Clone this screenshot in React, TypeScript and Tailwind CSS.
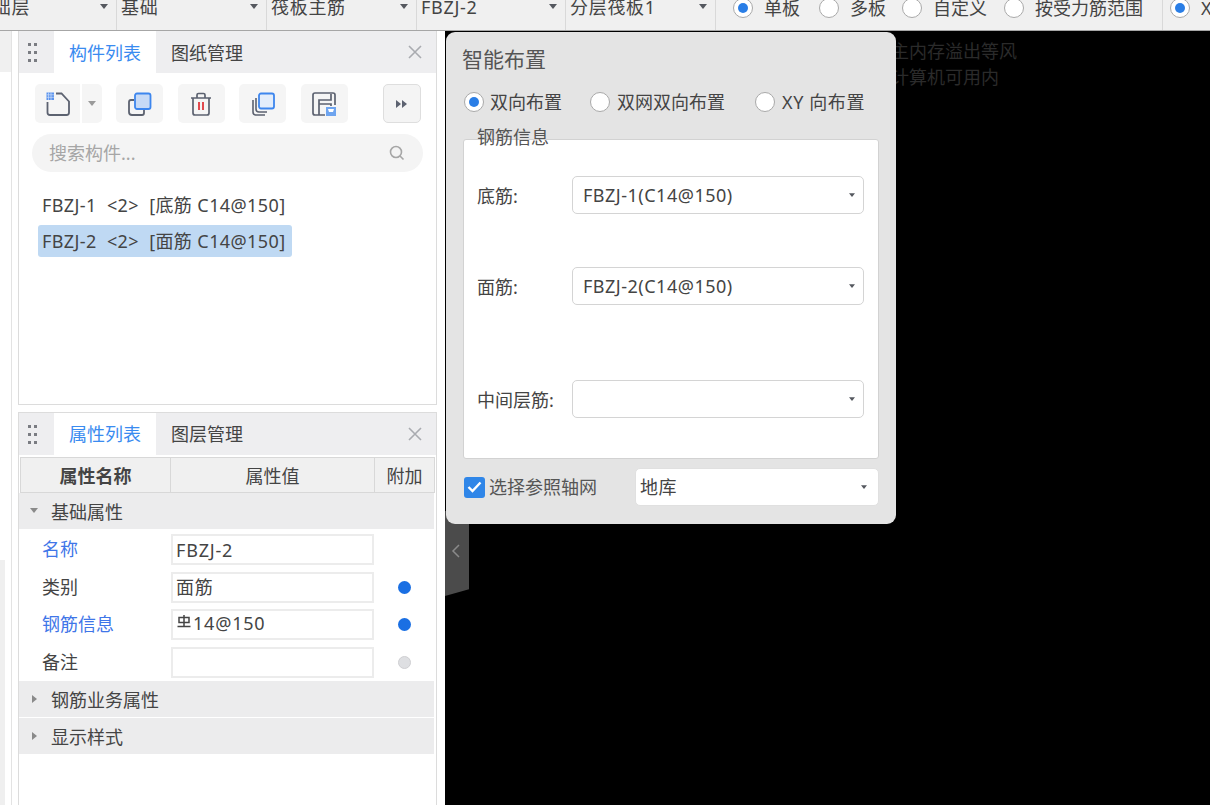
import React from "react";

const font = { fontFamily: '"Noto Sans", "Noto Sans CJK SC", sans-serif' };

function Caret({ className = "" }: { className?: string }) {
  return (
    <svg width="8" height="5" viewBox="0 0 8 5" className={className}>
      <path d="M0 0H8L4 5Z" fill="#55585f" />
    </svg>
  );
}

function ToolCell({ w, text, clip }: { w: string; text: string; clip?: boolean }) {
  return (
    <div className={`${w} h-[30px] shrink-0 flex items-start justify-between border-r border-[#d9d9d9] pl-1 pr-[8px] overflow-hidden`}>
      <span className={`text-[18px] leading-[24px] tracking-[0.7px] text-[#444] whitespace-nowrap -mt-[5px] ${clip ? "-ml-[30px]" : ""}`}>{text}</span>
      <Caret className="mt-[4px]" />
    </div>
  );
}

function Radio({ on, className = "" }: { on?: boolean; className?: string }) {
  return (
    <span className={`w-[20px] h-[20px] shrink-0 rounded-full border border-[#a9a9a9] bg-white flex items-center justify-center ${className}`}>
      {on && <span className="w-[10px] h-[10px] rounded-full bg-[#2a7ee6]" />}
    </span>
  );
}

function TopRadio({ label, on, w }: { label: string; on?: boolean; w: string }) {
  return (
    <div className={`${w} shrink-0 flex items-center gap-[11px] -mt-[14px] h-[30px]`}>
      <Radio on={on} />
      <span className="text-[18px] text-[#444] whitespace-nowrap">{label}</span>
    </div>
  );
}

function Dots() {
  return (
    <div className="w-[35px] shrink-0 grid grid-cols-[3px_3px] gap-x-[3px] gap-y-[5px] content-center pl-[9px] pr-[7px]">
      {[0, 1, 2, 3, 4, 5].map((i) => (
        <span key={i} className="w-[3px] h-[3px] bg-[#7a7c82]" />
      ))}
    </div>
  );
}

function CloseX() {
  return (
    <svg width="14" height="14" viewBox="0 0 14 14" className="ml-auto mr-[14px]">
      <path d="M1 1L13 13M13 1L1 13" stroke="#a9abb0" strokeWidth="1.6" />
    </svg>
  );
}

function PanelHeader({ a, b, textPad = "" }: { a: string; b: string; textPad?: string }) {
  return (
    <div className="h-[42px] shrink-0 bg-[#eeeef0] flex items-stretch">
      <Dots />
      <div className={`w-[102px] bg-white flex items-center justify-center text-[18px] text-[#3a8bf0] ${textPad}`}>{a}</div>
      <div className={`flex items-center pl-[15px] text-[18px] text-[#444] ${textPad}`}>{b}</div>
      <div className="ml-auto flex items-center">
        <CloseX />
      </div>
    </div>
  );
}

function IconBtn({ children }: { children: React.ReactNode }) {
  return <div className="w-[47px] h-[39px] rounded-[5px] bg-[#f5f5f5] flex items-center justify-center shrink-0">{children}</div>;
}

function PropRow({ label, blue, value, dot, sym }: { label: string; blue?: boolean; value?: string; dot?: "blue" | "gray"; sym?: boolean }) {
  return (
    <div className="h-[37.5px] flex items-center">
      <span className={`w-[152px] pl-[23px] text-[18px] ${blue ? "text-[#3f76e8]" : "text-[#444]"}`}>{label}</span>
      <div className="w-[203px] h-[31px] border-2 border-[#ececec] bg-white flex items-center pl-[3px] text-[18px] tracking-[0.8px] text-[#444] leading-none">
        {sym && (
          <svg width="16" height="16" viewBox="0 0 16 16" className="-mt-[5px] mr-[1px]">
            <path d="M3 3.5H13V8.5H3ZM8 1V12M1.5 12.5H14.5" fill="none" stroke="#444" strokeWidth="1.5" />
          </svg>
        )}
        <span className={sym ? "-mt-[3px]" : ""}>{value}</span>
      </div>
      <div className="w-[61px] flex justify-center">
        {dot === "blue" && <span className="w-[13px] h-[13px] rounded-full bg-[#1a6fe3]" />}
        {dot === "gray" && <span className="w-[13px] h-[13px] rounded-full bg-[#dedfe2] border border-[#cfcfd2]" />}
      </div>
    </div>
  );
}

function Group({ label, open, className = "" }: { label: string; open?: boolean; className?: string }) {
  return (
    <div className={`h-[36px] w-[415px] shrink-0 bg-[#ececed] flex items-center pt-[2px] text-[18px] text-[#444] ${className}`}>
      <span className="w-[32px] flex justify-center">
        {open ? (
          <svg width="8" height="5" viewBox="0 0 8 5" className="-mt-[3px] -ml-[2px]"><path d="M0 0H8L4 5Z" fill="#8a8a8a" /></svg>
        ) : (
          <svg width="5" height="8" viewBox="0 0 5 8" className="-mt-[3px] -ml-[2px]"><path d="M0 0V8L5 4Z" fill="#8a8a8a" /></svg>
        )}
      </span>
      {label}
    </div>
  );
}

function Select({ value, className = "" }: { value?: string; className?: string }) {
  return (
    <div className={`h-[38px] rounded-[5px] bg-white border border-[#d4d4d4] flex items-center justify-between pl-[10px] pr-[8px] text-[18px] tracking-[0.5px] text-[#444] ${className}`}>
      <span>{value}</span>
      <Caret className="w-[6px] h-[4px]" />
    </div>
  );
}

function FieldRow({ label, value, className = "" }: { label: string; value?: string; className?: string }) {
  return (
    <div className={`flex items-center ${className}`}>
      <span className="w-[108px] pl-[13px] text-[18px] text-[#444] whitespace-nowrap pt-[2px]">{label}</span>
      <Select value={value} className="w-[292px]" />
    </div>
  );
}

export default function App() {
  return (
    <div className="w-[1210px] h-[805px] overflow-hidden flex flex-col bg-black" style={font}>
      <div className="h-[31px] shrink-0 bg-[#f0f0f0] border-b border-[#a6a6a6] flex overflow-hidden">
        <ToolCell w="w-[117px]" text="基础层" clip />
        <ToolCell w="w-[150px]" text="基础" />
        <ToolCell w="w-[150px]" text="筏板主筋" />
        <ToolCell w="w-[149px]" text="FBZJ-2" />
        <ToolCell w="w-[150px]" text="分层筏板1" />
        <div className="flex pl-[17px] items-center">
          <TopRadio on label="单板" w="w-[86px]" />
          <TopRadio label="多板" w="w-[83px]" />
          <TopRadio label="自定义" w="w-[102px]" />
          <TopRadio label="按受力筋范围" w="w-[158px]" />
          <div className="w-px h-[30px] bg-[#d9d9d9] mr-[7px]" />
          <TopRadio on label="X" w="w-[50px]" />
        </div>
      </div>

      <div className="flex-1 flex min-h-0 relative">
        <div className="w-[445px] shrink-0 bg-white flex">
          <div className="w-[12px] shrink-0 border-r border-[#e3e3e3] flex flex-col">
            <div className="h-[41px] bg-[#f0f0f0]" />
            <div className="h-[488px]" />
            <div className="flex-1 w-[5px] bg-[#efefef]" />
          </div>
          <div className="w-[419px] shrink-0 ml-[6px] flex flex-col">
            <div className="h-[374px] shrink-0 border border-t-0 border-[#dcdcdc] flex flex-col">
              <PanelHeader a="构件列表" b="图纸管理" textPad="pt-[2px]" />
              <div className="flex items-center pl-[16px] pr-[15px] pt-[11px]">
                <div className="w-[67px] h-[39px] rounded-[5px] bg-[#f5f5f5] flex shrink-0">
                  <div className="w-[47px] border-r-2 border-white flex items-center justify-center">
                    <svg width="24" height="24" viewBox="0 0 24 24">
                      <path d="M1.5 10V20.5Q1.5 23 4 23H20.5Q23 23 23 20.5V9.5L15.5 1.5H10" fill="none" stroke="#5c6270" strokeWidth="1.8" />
                      <rect x="0.5" y="0.5" width="7.5" height="7.5" fill="#5a93ee" />
                      <path d="M2.5 0.5V8M5 0.5V8M0.5 2.8H8M0.5 5.3H8" stroke="#cfe0f8" strokeWidth="0.7" />
                    </svg>
                  </div>
                  <div className="flex-1 flex items-center justify-center">
                    <svg width="8" height="5" viewBox="0 0 8 5"><path d="M0 0H8L4 5Z" fill="#9a9a9a" /></svg>
                  </div>
                </div>
                <div className="ml-[14px] flex gap-[14.5px]">
                  <IconBtn>
                    <svg width="24" height="24" viewBox="0 0 24 24">
                      <path d="M6 8H3Q1 8 1 10V20Q1 23 4 23H14Q16 23 16 21V18" fill="none" stroke="#5c6270" strokeWidth="1.8" />
                      <rect x="7" y="1.5" width="15.5" height="15.5" rx="2" fill="#c7daf6" stroke="#3d86ee" strokeWidth="1.8" />
                    </svg>
                  </IconBtn>
                  <IconBtn>
                    <svg width="22" height="24" viewBox="0 0 22 24">
                      <path d="M1 6H21M7 6V3Q7 1.5 8.5 1.5H13.5Q15 1.5 15 3V6M3 6V21Q3 23 5 23H17Q19 23 19 21V6" fill="none" stroke="#5c6270" strokeWidth="1.7" />
                      <path d="M9 10V18M13 10V18" stroke="#e0393e" strokeWidth="1.8" />
                    </svg>
                  </IconBtn>
                  <IconBtn>
                    <svg width="24" height="24" viewBox="0 0 24 24">
                      <path d="M2 8V20Q2 23 5 23H14M5 6V17Q5 20 8 20H16" fill="none" stroke="#5c6270" strokeWidth="1.6" />
                      <rect x="8" y="1.5" width="15" height="15" rx="2" fill="#e3edfb" stroke="#3d86ee" strokeWidth="1.8" />
                    </svg>
                  </IconBtn>
                  <IconBtn>
                    <svg width="24" height="24" viewBox="0 0 24 24">
                      <path d="M13 23H3Q1 23 1 21V3Q1 1 3 1H21Q23 1 23 3V13M7 23V8H19V2M7 12H19V14" fill="none" stroke="#5c6270" strokeWidth="1.7" />
                      <rect x="14" y="15" width="10" height="9" fill="#6ea4ef" />
                      <path d="M16 17H22L21 20H17Z" fill="#fff" />
                    </svg>
                  </IconBtn>
                </div>
                <div className="ml-auto w-[38px] h-[39px] rounded-[5px] bg-[#f4f4f4] border border-[#dedede] flex items-center justify-center gap-px">
                  <svg width="12" height="8" viewBox="0 0 12 8"><path d="M0 0V8L5 4ZM6 0V8L11 4Z" fill="#5c6270" /></svg>
                </div>
              </div>
              <div className="mt-[11px] ml-[13px] w-[391px] h-[38px] rounded-full bg-[#f4f4f4] flex items-center justify-between pl-[17px] pr-[18px] text-[18px] text-[#a6a6a6]">
                搜索构件...
                <svg width="16" height="16" viewBox="0 0 16 16">
                  <circle cx="7" cy="7" r="5.5" fill="none" stroke="#a6a6a6" strokeWidth="1.6" />
                  <path d="M11 11L14.5 14.5" stroke="#a6a6a6" strokeWidth="1.6" />
                </svg>
              </div>
              <div className="mt-[15px] ml-[19px] flex flex-col items-start text-[18px] tracking-[0.4px] text-[#444] whitespace-pre">
                <div className="h-[36px] flex items-center pl-[4px]">{"FBZJ-1  <2>  [底筋 C14@150]"}</div>
                <div className="h-[32px] flex items-center pl-[4px] pr-[6px] bg-[#bfd9f3] rounded-[3px] mt-[2px]">{"FBZJ-2  <2>  [面筋 C14@150]"}</div>
              </div>
            </div>
            <div className="h-[7px] shrink-0" />
            <div className="flex-1 border border-b-0 border-[#dcdcdc] flex flex-col min-h-0">
              <PanelHeader a="属性列表" b="图层管理" />
              <div className="h-[36px] w-[415px] shrink-0 mt-[2px] bg-[#f0f0f0] border border-[#d8d8d8] flex text-[18px] text-[#444] ml-px">
                <div className="w-[150px] flex items-center justify-center pt-[3px] font-semibold border-r border-[#d8d8d8]">属性名称</div>
                <div className="w-[204px] flex items-center justify-center pt-[3px] border-r border-[#d8d8d8]">属性值</div>
                <div className="flex-1 flex items-center justify-center pt-[3px]">附加</div>
              </div>
              <Group label="基础属性" open />
              <div className="pt-[2px]">
                <PropRow label="名称" blue value="FBZJ-2" />
                <PropRow label="类别" value="面筋" dot="blue" />
                <PropRow label="钢筋信息" blue value="14@150" sym dot="blue" />
                <PropRow label="备注" dot="gray" />
              </div>
              <Group label="钢筋业务属性" />
              <Group label="显示样式" className="mt-[1px]" />
            </div>
          </div>
        </div>

        <div className="flex-1 bg-black relative">
          <div className="pl-[446px] pt-[7px] text-[18px] leading-[26px] text-[#2b2b2b] whitespace-nowrap overflow-hidden">
            <div>主内存溢出等风</div>
            <div>计算机可用内</div>
          </div>
        </div>

        <div className="absolute left-[445px] top-[480px] w-[24px] h-[85px] bg-[#4b4b4b] [clip-path:polygon(0_0,100%_0,100%_92%,0_100%)] flex items-center justify-center pb-[6px] pr-[3px]">
          <svg width="9" height="14" viewBox="0 0 9 14"><path d="M8 1L2 7L8 13" fill="none" stroke="#8a8a8a" strokeWidth="1.5" /></svg>
        </div>

        <div className="absolute left-[446px] top-[1px] w-[450px] h-[492px] rounded-[9px] bg-[#e4e4e4] flex flex-col pl-[17px] pr-[17px]">
          <div className="pt-[12px] -ml-[1px] text-[21px] leading-[30px] text-[#555]">智能布置</div>
          <div className="mt-[14px] flex items-center h-[28px] text-[18px] text-[#444]">
            <Radio on className="ml-[1px]" />
            <span className="ml-[6px]">双向布置</span>
            <Radio className="ml-[28px]" />
            <span className="ml-[7px]">双网双向布置</span>
            <Radio className="ml-[30px]" />
            <span className="ml-[7px] tracking-[0.6px]">XY 向布置</span>
          </div>
          <div className="relative mt-[23px] h-[320px] rounded-[3px] bg-white border border-[#d2d2d2] pt-[36px] pb-[39px] flex flex-col">
            <span className="absolute left-[13px] -top-[16px] text-[18px] leading-[26px] text-[#555]">钢筋信息</span>
            <FieldRow label="底筋:" value="FBZJ-1(C14@150)" />
            <FieldRow label="面筋:" value="FBZJ-2(C14@150)" className="mt-[53px]" />
            <FieldRow label="中间层筋:" className="mt-[75px]" />
          </div>
          <div className="mt-[9px] flex items-center">
            <span className="w-[21px] h-[21px] ml-[1px] rounded-[3px] bg-[#2f86e8] flex items-center justify-center">
              <svg width="15" height="12" viewBox="0 0 15 12"><path d="M1.5 6L5.5 10L13.5 1.5" fill="none" stroke="#fff" strokeWidth="2.4" /></svg>
            </span>
            <span className="ml-[4px] text-[18px] text-[#555]">选择参照轴网</span>
            <Select value="地库" className="ml-auto w-[244px] border-[#e0e0e0] !pl-[4px] !pr-[11px]" />
          </div>
        </div>
      </div>
    </div>
  );
}
